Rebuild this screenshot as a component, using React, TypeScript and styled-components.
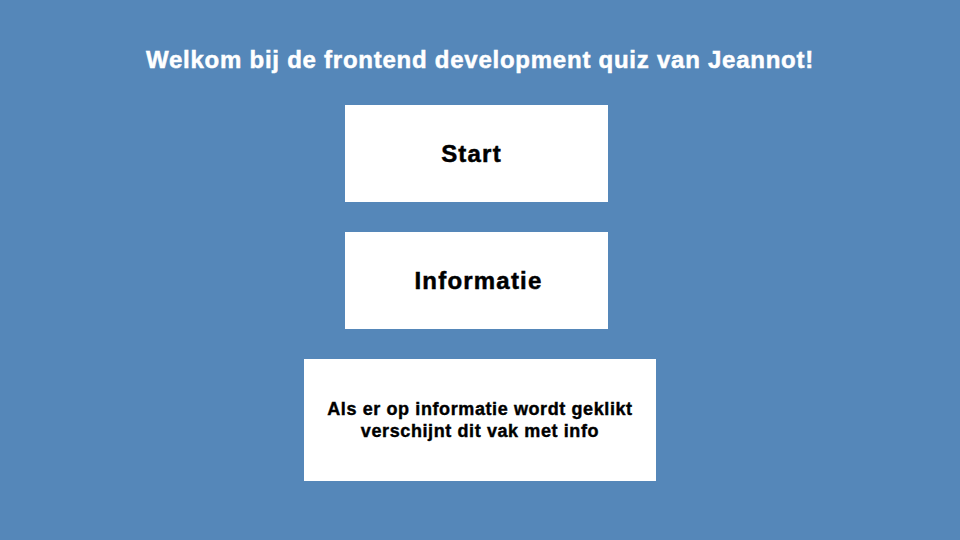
import styled, { createGlobalStyle } from "styled-components";

const GlobalStyle = createGlobalStyle`
  html, body {
    margin: 0;
    padding: 0;
    background: #5587b9;
  }
  body {
    font-family: "Liberation Sans", Arial, sans-serif;
  }
`;

export default function App() {
  return (
    <Page>
      <GlobalStyle />
      <Title>Welkom bij de frontend development quiz van Jeannot!</Title>
      <Menu>
        <MenuButton shift={-7} textOffset={-10}>Start</MenuButton>
        <MenuButton shift={-7} textOffset={4}>Informatie</MenuButton>
        <InfoBox>
          Als er op informatie wordt geklikt
          <br />
          verschijnt dit vak met info
        </InfoBox>
      </Menu>
    </Page>
  );
}

const Page = styled.main`
  width: 960px;
  height: 540px;
  box-sizing: border-box;
  padding-top: 44px;
  display: flex;
  flex-direction: column;
  align-items: center;
  background: #5587b9;
`;

const Title = styled.h1`
  margin: 0;
  font-size: 24px;
  font-weight: 700;
  line-height: 32px;
  letter-spacing: 0.75px;
  -webkit-text-stroke: 0.5px currentColor;
  color: #ffffff;
`;

const Menu = styled.div`
  display: flex;
  flex-direction: column;
  align-items: center;
  gap: 30px;
  margin-top: 29px;
`;

const MenuButton = styled.div<{ shift: number; textOffset: number }>`
  width: 263px;
  height: 97px;
  box-sizing: border-box;
  margin-left: ${({ shift }) => shift}px;
  padding-left: ${({ textOffset }) => Math.max(textOffset, 0)}px;
  padding-right: ${({ textOffset }) => Math.max(-textOffset, 0)}px;
  display: flex;
  align-items: center;
  justify-content: center;
  background: #ffffff;
  color: #000000;
  font-size: 24px;
  font-weight: 700;
  letter-spacing: 1.2px;
  -webkit-text-stroke: 0.5px currentColor;
  cursor: pointer;
`;

const InfoBox = styled.div`
  width: 352px;
  height: 122px;
  display: flex;
  align-items: center;
  justify-content: center;
  text-align: center;
  background: #ffffff;
  color: #000000;
  font-size: 18px;
  font-weight: 700;
  line-height: 22px;
  letter-spacing: 0.6px;
  -webkit-text-stroke: 0.4px currentColor;
`;
